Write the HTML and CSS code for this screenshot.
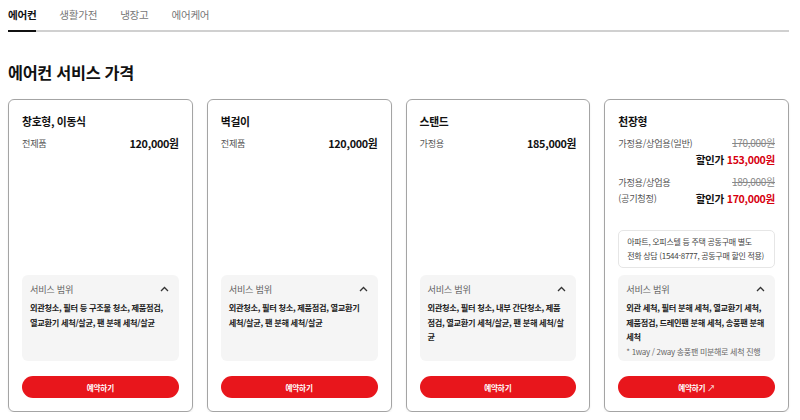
FILE: index.html
```html
<!DOCTYPE html>
<html lang="ko">
  <head>
    <meta charset="UTF-8" />
    <meta name="viewport" content="width=device-width, initial-scale=1.0" />
    <title>에어컨 서비스 가격</title>
    <link rel="stylesheet" href="styles.css">
  </head>
  <body>
    <!-- Category tabs -->
    <nav class="tabs">
      <a class="tab active">에어컨</a>
      <a class="tab">생활가전</a>
      <a class="tab">냉장고</a>
      <a class="tab">에어케어</a>
    </nav>

    <h2 class="page-title">에어컨 서비스 가격</h2>

    <div class="cards">
      <div class="card">
        <h3 class="card-title">창호형, 이동식</h3>
        <div class="price-row">
          <span class="label">전제품</span>
          <span class="price">120,000원</span>
        </div>
        <div class="card-bottom">
          <div class="scope">
            <div class="scope-head">
              <span>서비스 범위</span>
              <svg class="chevron" width="9" height="6" viewBox="0 0 9 6"><path d="M1 5 L4.5 1.5 L8 5" fill="none" stroke="#333" stroke-width="1.3"/></svg>
            </div>
            <p class="scope-text">외관청소, 필터 등 구조물 청소, 제품점검, 열교환기 세척/살균, 팬 분해 세척/살균</p>
          </div>
          <button class="btn">예약하기</button>
        </div>
      </div>

      <div class="card">
        <h3 class="card-title">벽걸이</h3>
        <div class="price-row">
          <span class="label">전제품</span>
          <span class="price">120,000원</span>
        </div>
        <div class="card-bottom">
          <div class="scope">
            <div class="scope-head">
              <span>서비스 범위</span>
              <svg class="chevron" width="9" height="6" viewBox="0 0 9 6"><path d="M1 5 L4.5 1.5 L8 5" fill="none" stroke="#333" stroke-width="1.3"/></svg>
            </div>
            <p class="scope-text">외관청소, 필터 청소, 제품점검, 열교환기 세척/살균, 팬 분해 세척/살균</p>
          </div>
          <button class="btn">예약하기</button>
        </div>
      </div>

      <div class="card">
        <h3 class="card-title">스탠드</h3>
        <div class="price-row">
          <span class="label">가정용</span>
          <span class="price">185,000원</span>
        </div>
        <div class="card-bottom">
          <div class="scope">
            <div class="scope-head">
              <span>서비스 범위</span>
              <svg class="chevron" width="9" height="6" viewBox="0 0 9 6"><path d="M1 5 L4.5 1.5 L8 5" fill="none" stroke="#333" stroke-width="1.3"/></svg>
            </div>
            <p class="scope-text">외관청소, 필터 청소, 내부 간단청소, 제품점검, 열교환기 세척/살균, 팬 분해 세척/살균</p>
          </div>
          <button class="btn">예약하기</button>
        </div>
      </div>

      <div class="card">
        <h3 class="card-title">천장형</h3>
        <div class="price-row">
          <span class="label">가정용/상업용(일반)</span>
          <div class="price-col">
            <span class="old-price">170,000원</span>
            <span class="sale">할인가 <em>153,000원</em></span>
          </div>
        </div>
        <div class="price-row">
          <span class="label">가정용/상업용<br>(공기청정)</span>
          <div class="price-col">
            <span class="old-price">189,000원</span>
            <span class="sale">할인가 <em>170,000원</em></span>
          </div>
        </div>
        <div class="card-bottom">
          <div class="notice">아파트, 오피스텔 등 주택 공동구매 별도<br>전화 상담 (1544-8777, 공동구매 할인 적용)</div>
          <div class="scope">
            <div class="scope-head">
              <span>서비스 범위</span>
              <svg class="chevron" width="9" height="6" viewBox="0 0 9 6"><path d="M1 5 L4.5 1.5 L8 5" fill="none" stroke="#333" stroke-width="1.3"/></svg>
            </div>
            <p class="scope-text">외관 세척, 필터 분해 세척, 열교환기 세척, 제품점검, 드레인팬 분해 세척, 송풍팬 분해 세척</p>
            <p class="scope-note">* 1way / 2way 송풍팬 미분해로 세척 진행</p>
          </div>
          <button class="btn">예약하기 <span class="arrow">↗</span></button>
        </div>
      </div>
    </div>
  </body>
</html>
```

FILE: styles.css
```css
body {
  font-family: "Noto Sans CJK KR", "Noto Sans", sans-serif;
  margin: 0;
  padding: 0 11px 0 8px;
  background-color: #fff;
  color: #111;
  letter-spacing: -0.3px;
}

.tabs {
  display: flex;
  gap: 23px;
  border-bottom: 2px solid #d0d0d0;
}

.tab {
  font-size: 10.6px;
  line-height: 18px;
  padding: 6px 0;
  color: #777;
  margin-bottom: -2px;
  border-bottom: 2px solid transparent;
}

.tab.active {
  color: #111;
  font-weight: bold;
  border-bottom-color: #111;
}

.page-title {
  font-size: 16.3px;
  line-height: 24px;
  margin: 28px 0 15px;
  font-weight: bold;
}

.cards {
  display: grid;
  grid-template-columns: repeat(4, 1fr);
  gap: 14px;
}

.card {
  display: flex;
  flex-direction: column;
  height: 313px;
  box-sizing: border-box;
  border: 1px solid #a4a4a4;
  border-radius: 6px;
  padding: 12px 13px 13px;
  box-shadow: 0 1px 2px rgba(0, 0, 0, 0.08);
}

.card-title {
  font-size: 10.8px;
  line-height: 18px;
  margin: 0 0 4px;
  font-weight: bold;
}

.price-row {
  display: flex;
  justify-content: space-between;
  align-items: flex-start;
  margin-bottom: 5px;
}

.label {
  font-size: 9.2px;
  line-height: 16px;
  color: #555;
  padding-top: 1px;
}

.price {
  font-size: 10.8px;
  line-height: 18px;
  font-weight: bold;
}

.price-col {
  display: flex;
  flex-direction: column;
  align-items: flex-end;
}

.old-price {
  font-size: 10px;
  line-height: 17px;
  color: #888;
  text-decoration: line-through;
}

.sale {
  font-size: 10.6px;
  line-height: 17px;
  font-weight: bold;
}

.sale em {
  font-style: normal;
  color: #d7000f;
}

.card-bottom {
  margin-top: auto;
}

.notice {
  border: 1px solid #e6e6e6;
  border-radius: 5px;
  padding: 4px 8px;
  font-size: 8px;
  line-height: 14px;
  color: #444;
  margin-bottom: 7px;
  white-space: nowrap;
}

.scope {
  background-color: #f5f5f5;
  border-radius: 6px;
  padding: 7px 10px 2px 8px;
  min-height: 86px;
  box-sizing: border-box;
}

.scope-head {
  display: flex;
  justify-content: space-between;
  align-items: center;
  font-size: 9.2px;
  line-height: 14px;
  color: #666;
  margin-bottom: 4px;
}

.scope-text {
  margin: 0;
  font-size: 8.2px;
  line-height: 14.5px;
  font-weight: bold;
  color: #222;
}

.scope-note {
  margin: 1px 0 0;
  font-size: 8px;
  line-height: 14px;
  color: #666;
}

.btn {
  display: block;
  width: 100%;
  height: 22px;
  margin-top: 15px;
  border: none;
  border-radius: 11px;
  background-color: #e8161c;
  color: #fff;
  font-family: inherit;
  font-size: 7.6px;
  font-weight: bold;
  letter-spacing: -0.2px;
  cursor: pointer;
}

.arrow {
  font-weight: normal;
  font-size: 8px;
}
```
